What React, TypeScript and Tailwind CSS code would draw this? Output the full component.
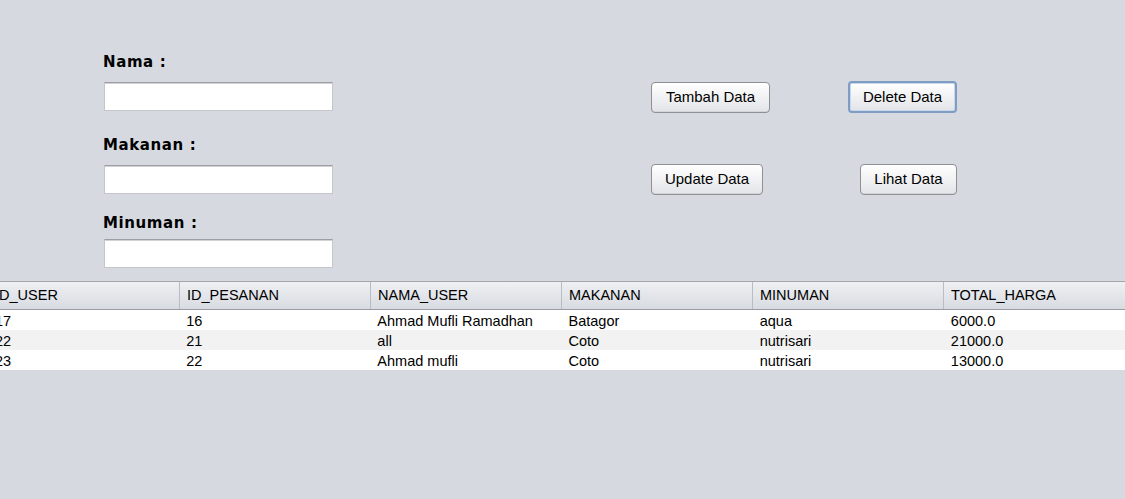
const columns = ["ID_USER", "ID_PESANAN", "NAMA_USER", "MAKANAN", "MINUMAN", "TOTAL_HARGA"];

const rows = [
  ["17", "16", "Ahmad Mufli Ramadhan", "Batagor", "aqua", "6000.0"],
  ["22", "21", "all", "Coto", "nutrisari", "21000.0"],
  ["23", "22", "Ahmad mufli", "Coto", "nutrisari", "13000.0"],
];

function Field() {
  return (
    <input
      type="text"
      className="block w-[229px] h-[29px] bg-white border border-[#c4c6cb] border-t-[#9c9ea3] shadow-[inset_0_1px_0_#d0d2d6] outline-none"
    />
  );
}

function Label({ children, className }: { children: string; className?: string }) {
  return (
    <div className={`h-[18px] leading-[18px] text-[15px] font-bold tracking-[0.6px] text-black font-['DejaVu_Sans',sans-serif] ${className ?? ""}`}>
      {children}
    </div>
  );
}

function Button({ children, focused, className }: { children: string; focused?: boolean; className?: string }) {
  return (
    <button
      className={`h-[31px] rounded-[4px] bg-gradient-to-b from-white to-[#e3e4e8] text-[15px] text-black font-['Liberation_Sans',Arial,sans-serif] ${
        focused
          ? "border-2 border-[#7f9dc4] shadow-[inset_0_0_0_1px_#c9d7ea]"
          : "border border-[#8e9094] shadow-[inset_0_-1px_0_#d3d4d8]"
      } ${className ?? ""}`}
    >
      {children}
    </button>
  );
}

export default function App() {
  return (
    <div className="w-[1125px] h-[499px] bg-[#d6d9df] overflow-hidden font-['Liberation_Sans',Arial,sans-serif]">
      {/* Form area */}
      <div className="h-[281px] flex pl-[103px] pt-[53px]">
        <div className="w-[231px]">
          <Label>Nama :</Label>
          <div className="mt-[11px] ml-px"><Field /></div>
          <Label className="mt-[25px]">Makanan :</Label>
          <div className="mt-[11px] ml-px"><Field /></div>
          <Label className="mt-[20px]">Minuman :</Label>
          <div className="mt-[7px] ml-px"><Field /></div>
        </div>

        <div className="ml-[317px] w-[306px] pt-[28px]">
          <div className="flex justify-between items-start">
            <Button className="w-[119px] mt-px">Tambah Data</Button>
            <Button focused className="w-[109px] h-[32px]">Delete Data</Button>
          </div>
          <div className="flex justify-between mt-[51px]">
            <Button className="w-[112px]">Update Data</Button>
            <Button className="w-[97px]">Lihat Data</Button>
          </div>
        </div>
      </div>

      {/* Table */}
      <div className="-ml-[12px] w-[1146px] text-[14.5px] text-black">
        <div className="flex h-[29px] border-t border-[#a3a5aa] border-b border-b-[#9a9ca1] bg-gradient-to-b from-[#eef0f3] to-[#d8dbe1]">
          {columns.map((c, i) => (
            <div
              key={c}
              className={`w-[191px] pl-[7px] flex items-center ${i > 0 ? "border-l border-[#b9bcc2]" : ""}`}
            >
              {c}
            </div>
          ))}
        </div>
        {rows.map((r, ri) => (
          <div key={ri} className={`flex h-[20px] items-center ${ri === 1 ? "bg-[#f2f2f2]" : "bg-white"}`}>
            {r.map((v, ci) => (
              <div key={ci} className={`w-[191px] pl-[7px] pt-px leading-[20px] ${ci > 0 ? "ml-px" : ""}`}>
                {v}
              </div>
            ))}
          </div>
        ))}
      </div>
    </div>
  );
}
